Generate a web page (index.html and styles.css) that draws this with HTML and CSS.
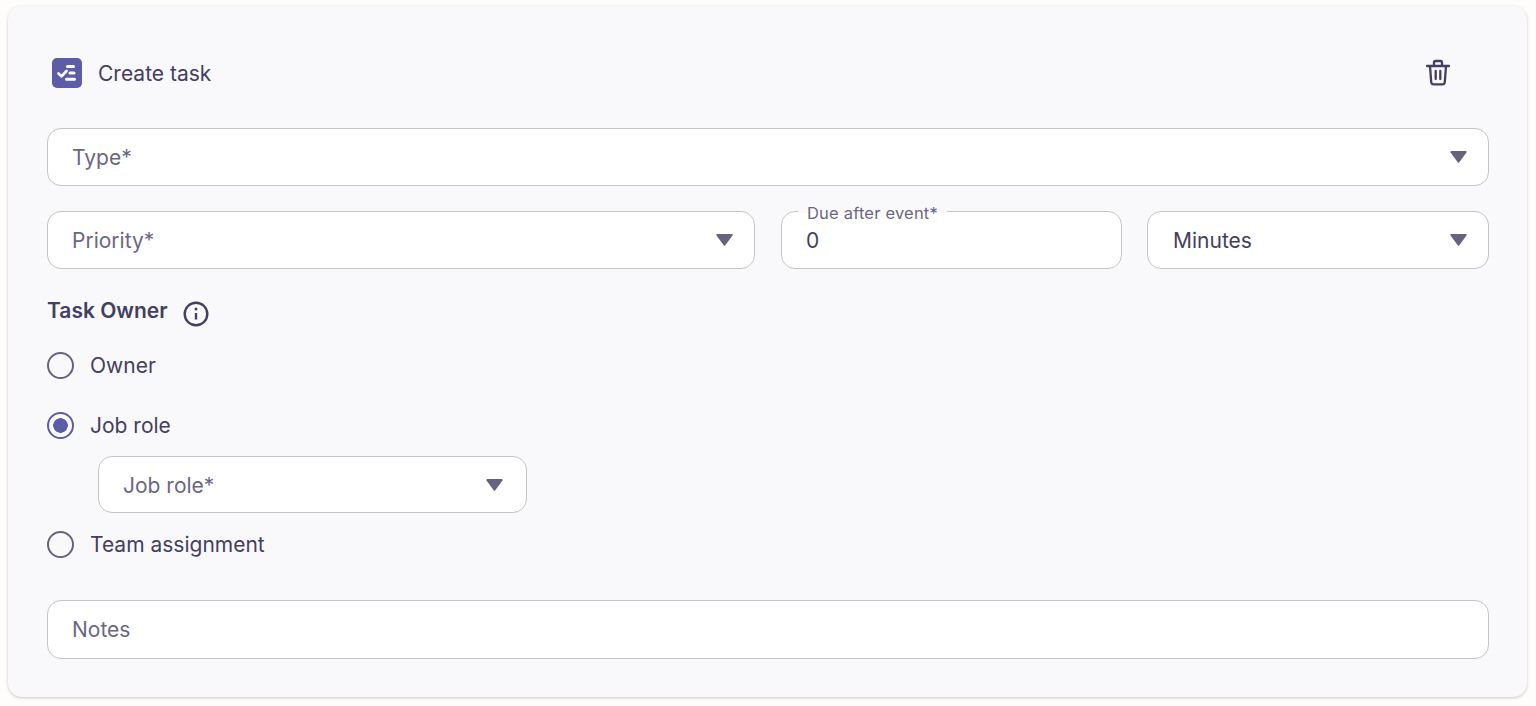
FILE: index.html
```html
<!DOCTYPE html>
<html lang="en">
<head>
<meta charset="utf-8">
<title>Create task</title>
<link rel="stylesheet" href="styles.css">
</head>
<body>
<main class="card">
  <header class="head">
    <div class="head-title">
      <svg class="task-icon" width="30" height="30" viewBox="0 0 30 30"><rect width="30" height="30" rx="5" fill="#5d5ca8"/><path d="M6.500 15.500l3 2.800 5-5.300" fill="none" stroke="#fff" stroke-width="2.600" stroke-linecap="round" stroke-linejoin="round"/><path d="M15.500 8.500h6M18 15h4M14.500 21.200h8" fill="none" stroke="#fff" stroke-width="3" stroke-linecap="round"/></svg>
      <span>Create task</span>
    </div>
    <svg class="trash" width="26" height="28" viewBox="0 0 26 28" fill="none" stroke="#443e63" stroke-width="2.300" stroke-linecap="round" stroke-linejoin="round"><path d="M2 7h22M5 7l1.200 16a2.500 2.500 0 0 0 2.500 2.300h8.600a2.500 2.500 0 0 0 2.500-2.300L21 7M9 7V3.500A1.500 1.500 0 0 1 10.500 2h5A1.500 1.500 0 0 1 17 3.500V7M10.700 12v8M15.300 12v8"/></svg>
  </header>

  <div class="field"><span class="ph">Type*</span><svg class="caret" viewBox="0 0 17 12"><path d="M1.300 0h14.400a1 1 0 0 1 .8 1.600l-7.200 9.600a1 1 0 0 1-1.600 0L.5 1.600A1 1 0 0 1 1.300 0z"/></svg></div>

  <div class="row">
    <div class="field grow-priority"><span class="ph">Priority*</span><svg class="caret" viewBox="0 0 17 12"><path d="M1.300 0h14.400a1 1 0 0 1 .8 1.600l-7.200 9.600a1 1 0 0 1-1.600 0L.5 1.600A1 1 0 0 1 1.300 0z"/></svg></div>
    <div class="field grow-due">
      <span class="legend">Due after event*</span>
      <span class="value">0</span>
    </div>
    <div class="field grow-unit"><span class="value">Minutes</span><svg class="caret" viewBox="0 0 17 12"><path d="M1.300 0h14.400a1 1 0 0 1 .8 1.600l-7.200 9.600a1 1 0 0 1-1.600 0L.5 1.600A1 1 0 0 1 1.300 0z"/></svg></div>
  </div>

  <div class="owner-title">
    <strong>Task Owner</strong>
    <svg width="26" height="26" viewBox="0 0 26 26" fill="none" stroke="#443e63"><circle cx="13" cy="13" r="11.300" stroke-width="2.400"/><path d="M13 12v6.500" stroke-width="2.400"/><circle cx="13" cy="8" r="1.500" fill="#443e63" stroke="none"/></svg>
  </div>

  <div class="radios">
    <label class="radio"><i class="dot"></i>Owner</label>
    <label class="radio"><i class="dot on"></i>Job role</label>
    <div class="field job"><span class="ph">Job role*</span><svg class="caret" viewBox="0 0 17 12"><path d="M1.300 0h14.400a1 1 0 0 1 .8 1.600l-7.200 9.600a1 1 0 0 1-1.600 0L.5 1.600A1 1 0 0 1 1.300 0z"/></svg></div>
    <label class="radio team"><i class="dot"></i>Team assignment</label>
  </div>

  <div class="field notes"><span class="ph">Notes</span></div>
</main>
</body>
</html>
```

FILE: styles.css
```css
* { box-sizing: border-box; }
html, body { height: 100%; }
body {
  margin: 0;
  padding: 6px 9px 9px 8px;
  background: #fffdfb;
  font-family: Inter, Roboto, "Liberation Sans", sans-serif;
  color: #443e63;
  overflow: hidden;
}
.card {
  background: #f9f9fc;
  border-radius: 14px;
  box-shadow: 0 1px 3px rgba(60, 60, 80, .28);
  height: 691px;
  padding: 0 38px 0 39px;
  display: flex;
  flex-direction: column;
}
.head {
  height: 122px;
  padding: 0 38px 0 5px;
  display: flex;
  align-items: center;
  justify-content: space-between;
  flex: none;
}
.head-title {
  display: flex;
  align-items: center;
  gap: 16px;
  font-size: 21px;
  margin-top: 12px;
}
.trash { margin-top: 12px; }
.field {
  position: relative;
  height: 58px;
  flex: none;
  background: #fff;
  border: 1px solid #c4c4c8;
  border-radius: 14px;
  padding: 0 24px;
  display: flex;
  align-items: center;
  justify-content: space-between;
  font-size: 21px;
}
.ph { color: #6a6783; }
.value { color: #443e63; }
.caret {
  width: 17px;
  height: 12px;
  margin-right: -3px;
  fill: #66637f;
  flex: none;
}
.row {
  display: flex;
  gap: 26px;
  margin-top: 25px;
}
.grow-priority { width: 708px; }
.grow-due { width: 341px; }
.grow-unit { width: 342px; margin-left: -1px; padding-left: 25px; }
.legend {
  position: absolute;
  top: -11px;
  left: 16px;
  padding: 0 9px;
  font-size: 16.500px;
  letter-spacing: .2px;
  line-height: 24px;
  color: #6a6783;
  background: linear-gradient(#f9f9fc 50%, #fff 50%);
}
.owner-title {
  display: flex;
  align-items: center;
  gap: 15px;
  margin-top: 28px;
  height: 34px;
  font-size: 21px;
}
.owner-title strong { font-weight: 600; margin-top: -8px; }
.radios { display: flex; flex-direction: column; margin-top: 4px; }
.radio {
  display: flex;
  align-items: center;
  gap: 16px;
  height: 60px;
  font-size: 21px;
}
.dot {
  width: 27px;
  height: 27px;
  border-radius: 50%;
  border: 2.500px solid #66637f;
  flex: none;
}
.dot.on { border-color: #5d5ca8; background: radial-gradient(circle, #5d5ca8 0 7px, transparent 7.500px); }
.job {
  width: 429px;
  height: 57px;
  margin: 1px 0 1px 51px;
  padding-top: 1px;
}
.job .caret { margin-right: -1px; }
.team { margin-bottom: 26px; }
.notes { height: 59px; }
```
